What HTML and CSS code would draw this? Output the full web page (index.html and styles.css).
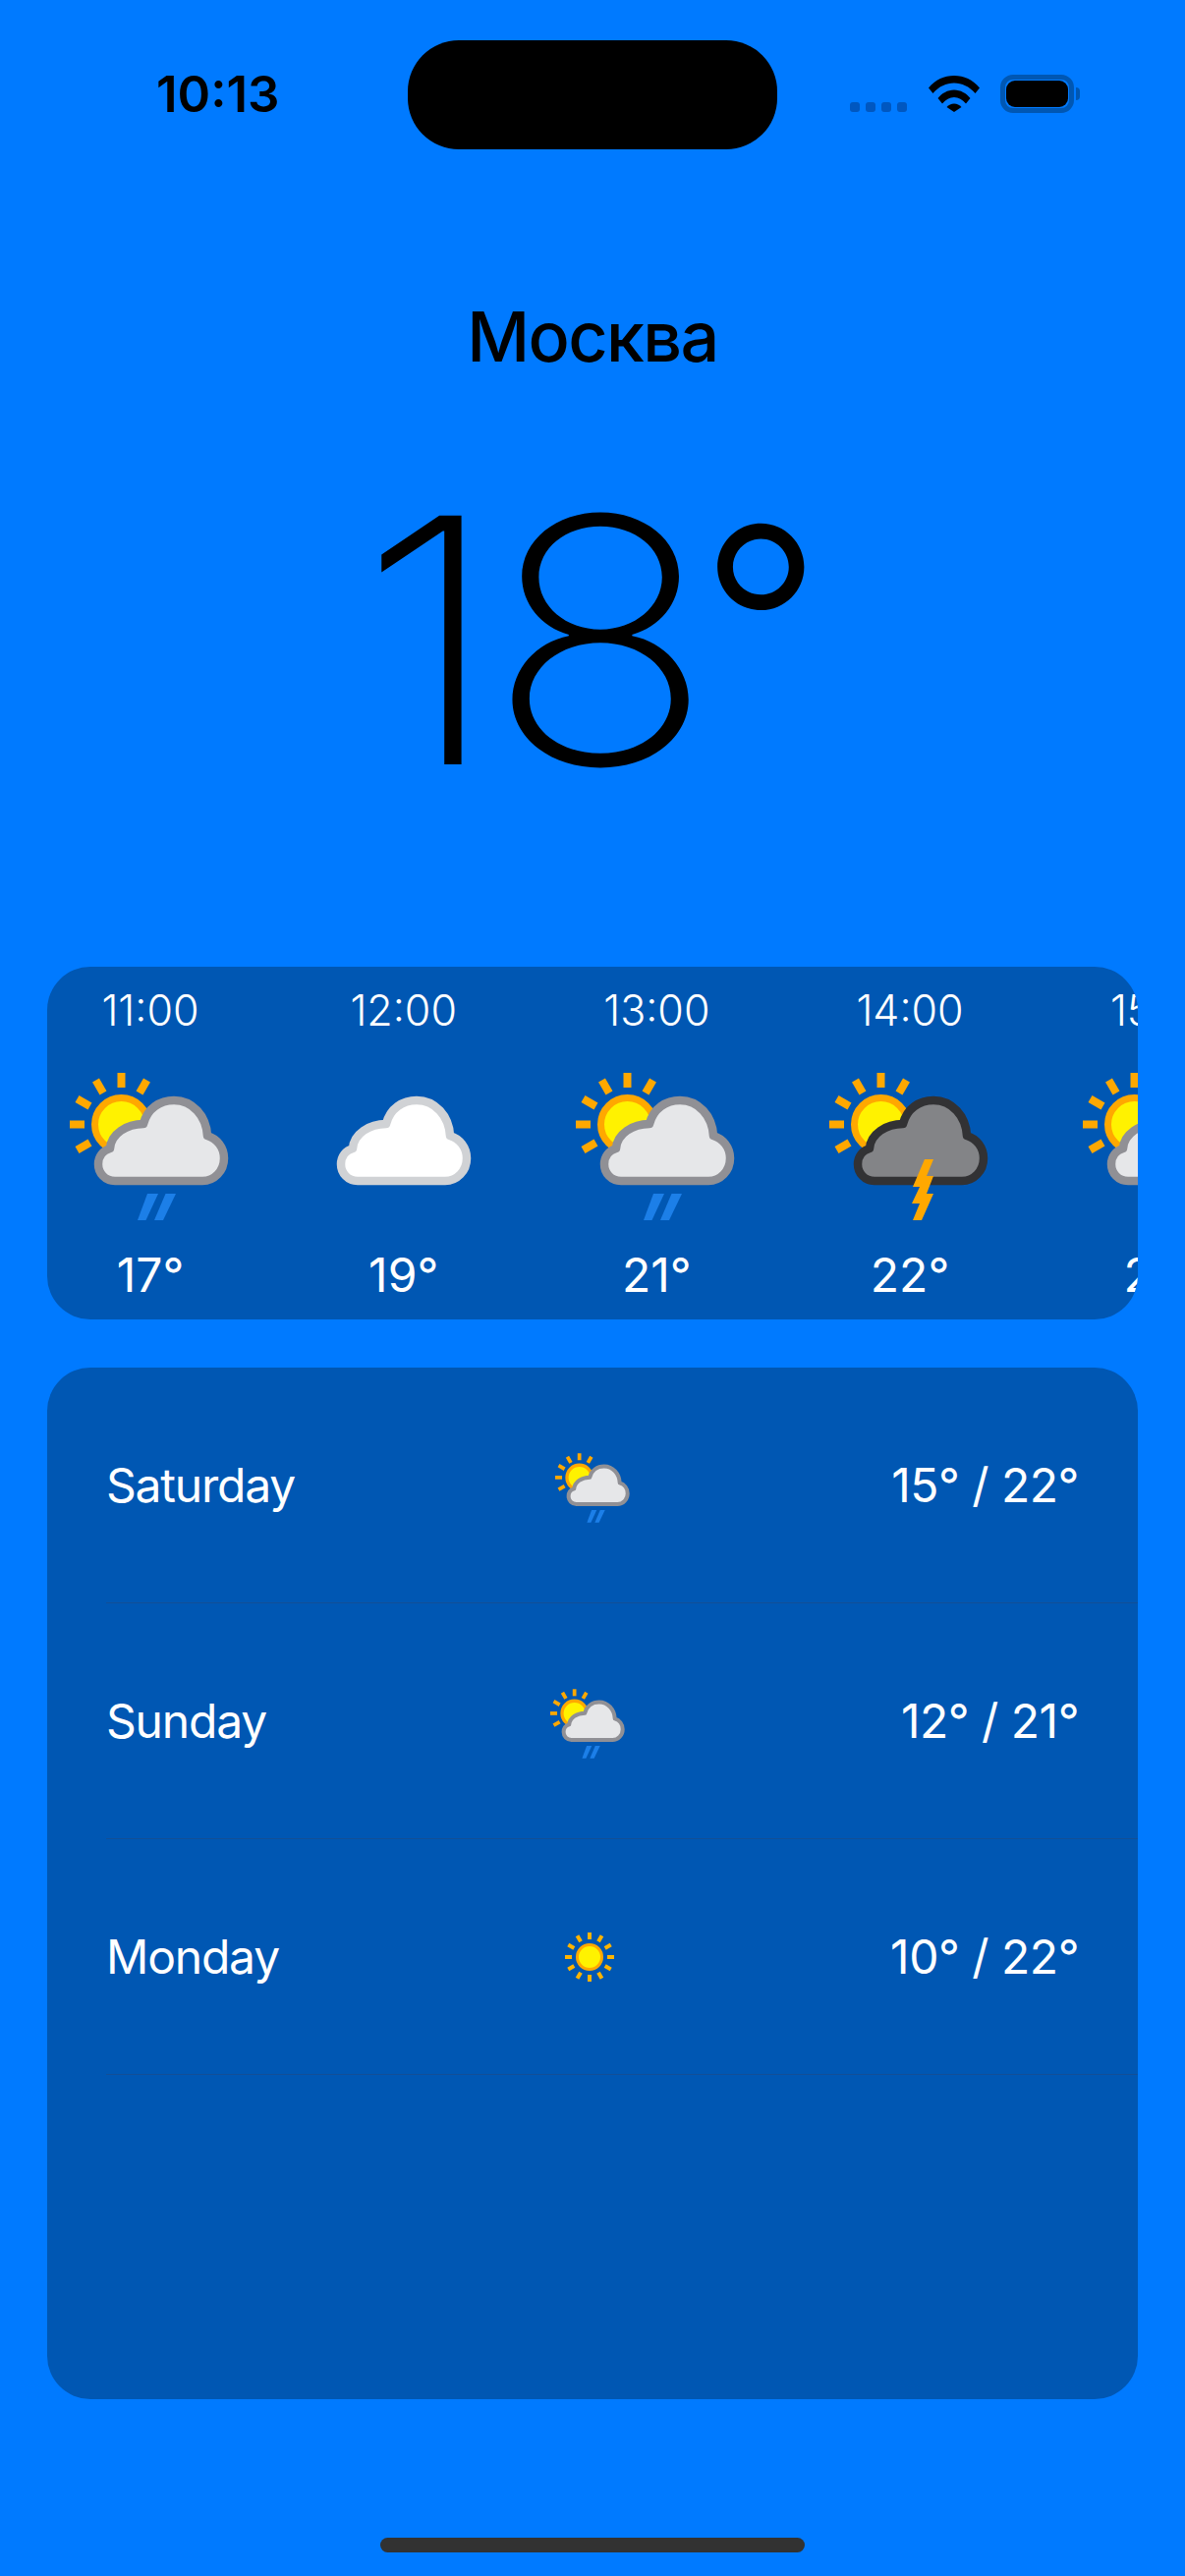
FILE: index.html
```html
<!DOCTYPE html>
<html lang="ru">
<head>
  <meta charset="UTF-8">
  <meta name="viewport" content="width=device-width, initial-scale=1.0">
  <title>Погода</title>
  <link rel="stylesheet" href="styles.css">
</head>
<body>
  <!-- Общие части иконок -->
  <svg class="defs" width="0" height="0">
    <defs>
      <g id="sunPart">
        <g class="rays">
          <path d="M52.5 0v15"/>
          <path d="M26.5 7.5L34 20.5"/>
          <path d="M7.5 26.5L20.5 34"/>
          <path d="M0 52.5h15"/>
          <path d="M7.5 78.5L20.5 71"/>
          <path d="M78.5 7.5L71 20.5"/>
        </g>
        <circle class="sun" cx="52.5" cy="52.5" r="27"/>
      </g>
      <path id="cloudPart" d="M46 110C36 110 29 102 29 93C29 85 34 79 41 77C42 62 58 52 75 52C79 36 92 28 106 28C125 28 139 44 140 64C150 67 157 76 157 87C157 100 147 110 135 110Z"/>
      <g id="rainPart" class="rain">
        <path d="M79 123h11L77.5 150H69Z"/>
        <path d="M97.5 123H108L95 150H86Z"/>
      </g>
      <symbol id="iconRain" viewBox="0 0 164 150">
        <use href="#sunPart"/>
        <use href="#cloudPart" class="cloud"/>
        <use href="#rainPart"/>
      </symbol>
      <symbol id="iconCloud" viewBox="11 0 164 150">
        <use href="#cloudPart" class="cloud cloud-white"/>
      </symbol>
      <symbol id="iconStorm" viewBox="0 0 164 150">
        <use href="#sunPart"/>
        <use href="#cloudPart" class="cloud cloud-dark"/>
        <path class="bolt" d="M97 88H106L99 105H106L99 123H106L94 150H85L92 133H84L92 116H85Z"/>
      </symbol>
      <symbol id="iconSun" viewBox="0 0 50 50">
        <g class="small-rays">
          <path d="M25 0v7"/><path d="M37.5 3.3l-3.5 6"/><path d="M46.7 12.5l-6 3.5"/>
          <path d="M50 25h-7"/><path d="M46.7 37.5l-6-3.5"/><path d="M37.5 46.7l-3.5-6"/>
          <path d="M25 50v-7"/><path d="M12.5 46.7l3.5-6"/><path d="M3.3 37.5l6-3.5"/>
          <path d="M0 25h7"/><path d="M3.3 12.5l6 3.5"/><path d="M12.5 3.3l3.5 6"/>
        </g>
        <circle class="sun-small" cx="25" cy="25" r="12.5"/>
      </symbol>
    </defs>
  </svg>

  <div class="phone">
    <!-- Статус-бар -->
    <div class="status-bar">
      <span class="clock">10:13</span>
      <div class="island"></div>
      <div class="status-icons">
        <div class="signal"><i></i><i></i><i></i><i></i></div>
        <svg class="wifi" width="52" height="38" viewBox="0 0 52 38">
          <path d="M0 13.5C7 5 16 1 26 1s19 4 26 12.5L47.5 19C41.5 12 34 8.5 26 8.5S10.5 12 4.5 19Z"/>
          <path d="M9.5 24C13.5 19 19.5 15.5 26 15.5S38.5 19 42.5 24L38 29.5C34.5 25.5 30.5 23 26 23S17.5 25.5 14 29.5Z"/>
          <path d="M18.5 33C20.5 30.8 23 29.5 26 29.5S31.5 30.8 33.5 33L26 38Z"/>
        </svg>
        <div class="battery"><div class="battery-level"></div></div>
        <div class="battery-cap"></div>
      </div>
    </div>

    <!-- Город и температура -->
    <h1 class="city">Москва</h1>
    <div class="current-temp">
      <span class="temp-digits">18</span>
      <span class="temp-degree">°</span>
    </div>

    <!-- Прогноз по часам -->
    <div class="card hours">
      <div class="hour">
        <span class="hour-time">11:00</span>
        <svg class="hour-icon"><use href="#iconRain"/></svg>
        <span class="hour-temp">17°</span>
      </div>
      <div class="hour">
        <span class="hour-time">12:00</span>
        <svg class="hour-icon"><use href="#iconCloud"/></svg>
        <span class="hour-temp">19°</span>
      </div>
      <div class="hour">
        <span class="hour-time">13:00</span>
        <svg class="hour-icon"><use href="#iconRain"/></svg>
        <span class="hour-temp">21°</span>
      </div>
      <div class="hour">
        <span class="hour-time">14:00</span>
        <svg class="hour-icon"><use href="#iconStorm"/></svg>
        <span class="hour-temp">22°</span>
      </div>
      <div class="hour">
        <span class="hour-time">15:00</span>
        <svg class="hour-icon"><use href="#iconRain"/></svg>
        <span class="hour-temp">22°</span>
      </div>
    </div>

    <!-- Прогноз по дням -->
    <div class="card days">
      <div class="day">
        <span class="day-name">Saturday</span>
        <svg class="day-icon"><use href="#iconRain"/></svg>
        <span class="day-temp">15° / 22°</span>
      </div>
      <div class="day">
        <span class="day-name">Sunday</span>
        <svg class="day-icon nudge"><use href="#iconRain"/></svg>
        <span class="day-temp">12° / 21°</span>
      </div>
      <div class="day">
        <span class="day-name">Monday</span>
        <svg class="day-icon-sun nudge"><use href="#iconSun"/></svg>
        <span class="day-temp">10° / 22°</span>
      </div>
    </div>

    <div class="home-bar"></div>
  </div>
</body>
</html>
```

FILE: styles.css
```css
* {
  box-sizing: border-box;
}
body {
  margin: 0;
  background-color: #007aff;
  font-family: Inter, "Noto Sans", sans-serif;
  color: #000;
}
.defs {
  position: absolute;
}
.phone {
  height: 2622px;
  display: flex;
  flex-direction: column;
  overflow: hidden;
}

/* Статус-бар */
.status-bar {
  height: 152px;
  padding-top: 41px;
  display: flex;
  justify-content: center;
  position: relative;
}
.clock {
  position: absolute;
  left: 159px;
  top: 66px;
  font-size: 51px;
  line-height: 60px;
  font-weight: 600;
}
.island {
  width: 376px;
  height: 111px;
  border-radius: 52px;
  background-color: #000;
}
.status-icons {
  position: absolute;
  left: 865px;
  top: 76px;
  display: flex;
  align-items: flex-end;
}
.signal {
  display: flex;
  gap: 6px;
  margin-right: 22px;
  margin-bottom: 1px;
}
.signal i {
  width: 10px;
  height: 10px;
  border-radius: 3px;
  background-color: #0057c0;
}
.wifi {
  fill: #000;
  margin-right: 21px;
  margin-bottom: 1px;
}
.battery {
  width: 75px;
  height: 39px;
  border: 5px solid #0057b3;
  border-radius: 13px;
  padding: 1px;
}
.battery-level {
  height: 100%;
  border-radius: 9px;
  background-color: #000;
}
.battery-cap {
  width: 4px;
  height: 13px;
  margin: 0 0 13px 2px;
  border-radius: 0 6px 6px 0;
  background-color: #0057b3;
}

/* Город и температура */
.city {
  margin: 0;
  padding-top: 146px;
  text-align: center;
  font-size: 70px;
  line-height: 90px;
  font-weight: 450;
  letter-spacing: -1.6px;
}
.current-temp {
  height: 596px;
  padding-top: 64px;
  padding-left: 12px;
  display: flex;
  justify-content: center;
  align-items: flex-start;
}
.temp-digits {
  font-size: 348px;
  line-height: 400px;
  font-weight: 200;
  letter-spacing: -13px;
  transform: scaleX(1.1);
}
.temp-degree {
  margin-top: -16px;
  margin-left: 14px;
  font-size: 278px;
  line-height: 400px;
  font-weight: 280;
}

/* Карточки */
.card {
  margin: 0 48px;
  border-radius: 44px;
  background-color: #0057b3;
  color: #fff;
  overflow: hidden;
}
.hours {
  height: 359px;
  padding-left: 23px;
  display: flex;
  gap: 93.7px;
}
.hour {
  flex: 0 0 164px;
  display: flex;
  flex-direction: column;
  align-items: center;
}
.hour-time {
  margin-top: 17px;
  height: 54px;
  line-height: 54px;
  font-size: 43px;
  font-weight: 300;
}
.hour-icon {
  width: 164px;
  height: 150px;
  margin-top: 37px;
}
.hour-temp {
  margin-top: 26px;
  line-height: 60px;
  font-size: 48px;
}
.days {
  height: 1050px;
  margin-top: 49px;
}
.day {
  height: 240px;
  margin-left: 60px;
  padding-right: 60px;
  display: flex;
  align-items: center;
  justify-content: space-between;
  border-bottom: 1px solid #124f96;
  font-size: 48px;
  font-weight: 400;
}
.day-name {
  letter-spacing: -1.2px;
}
.day-temp {
  letter-spacing: -0.5px;
}
.day-icon {
  width: 77px;
  height: 71px;
  margin-top: 6px;
}
.day-icon-sun {
  width: 50px;
  height: 50px;
}
.nudge {
  margin-left: 9px;
}

/* Цвета иконок */
.rays {
  fill: none;
  stroke: #ffa800;
  stroke-width: 8;
}
.small-rays {
  fill: none;
  stroke: #ffb400;
  stroke-width: 4;
}
.sun {
  fill: #fff200;
  stroke: #ffa800;
  stroke-width: 7;
}
.sun-small {
  fill: #fff200;
  stroke: #ffa800;
  stroke-width: 3;
}
.cloud {
  fill: #e6e7e9;
  stroke: #909095;
  stroke-width: 8.5;
  stroke-linejoin: round;
}
.cloud-white {
  fill: #fff;
  stroke: #d0d2d5;
}
.cloud-dark {
  fill: #838487;
  stroke: #323234;
}
.rain {
  fill: #1c7fe8;
}
.bolt {
  fill: #ffa800;
}

.home-bar {
  position: absolute;
  left: 387px;
  top: 2583px;
  width: 432px;
  height: 15px;
  border-radius: 8px;
  background-color: #323232;
}
```
